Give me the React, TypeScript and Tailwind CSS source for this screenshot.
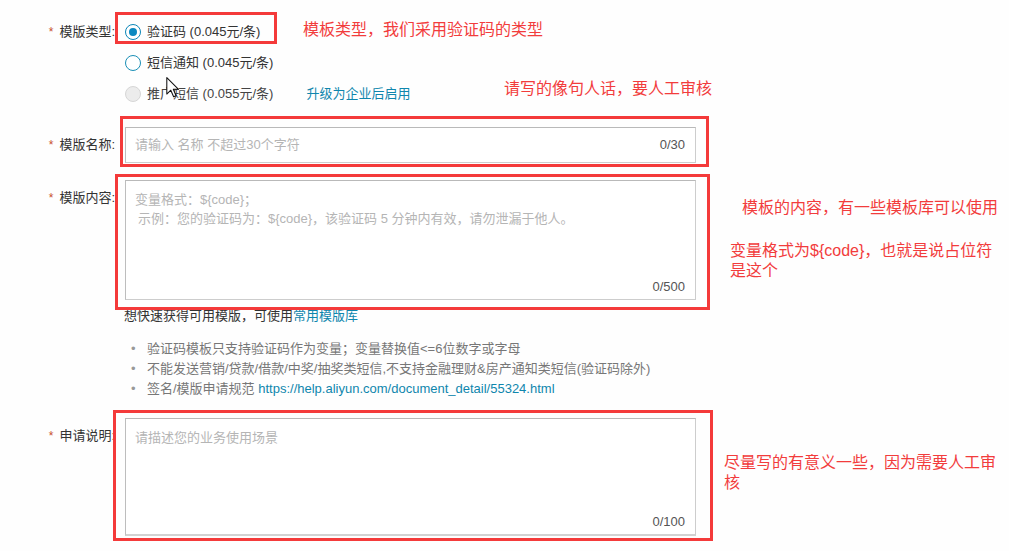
import type { ReactNode } from 'react';

const FONT = '"Liberation Sans", "Noto Sans CJK SC", sans-serif';

function Label({ children, className = '' }: { children: ReactNode; className?: string }) {
  return (
    <div className={`w-[115px] shrink-0 flex items-center justify-end text-[13px] text-[#333] ${className}`}>
      <span className="mr-[6px] text-[#c8502e] text-[12px]">*</span>
      {children}
    </div>
  );
}

function Radio({ state, children }: { state: 'checked' | 'idle' | 'disabled'; children: ReactNode }) {
  const ring =
    state === 'checked'
      ? 'border-[#0b86b8] bg-white'
      : state === 'idle'
        ? 'border-[#1a8fb6] bg-white'
        : 'border-[#d6d6d6] bg-[#ececec]';
  return (
    <div className="h-[31px] flex items-center">
      <span className={`w-[16px] h-[16px] rounded-full border-[1.5px] flex items-center justify-center ${ring}`}>
        {state === 'checked' && <span className="w-[8px] h-[8px] rounded-full bg-[#0a88c0]" />}
      </span>
      <span className="ml-[6px] text-[13px] text-[#333]">{children}</span>
    </div>
  );
}

function Field({ placeholder, counter, tall, height }: { placeholder: ReactNode; counter: string; tall?: boolean; height: string }) {
  return (
    <div
      className={`relative w-[571px] ${height} border border-[#cdcdcd] border-t-[#b9b9b9] border-l-[#bdbdbd] bg-white text-[13px]`}
    >
      <div className={`text-[#b5b5b5] pl-[9px] ${tall ? 'pt-[9px] leading-[19px]' : 'leading-[34px]'}`}>{placeholder}</div>
      <span
        className={`absolute right-[10px] text-[#555] ${tall ? 'bottom-[5px] leading-[14px]' : 'top-0 leading-[34px]'}`}
      >
        {counter}
      </span>
    </div>
  );
}

function RedBox({ className }: { className: string }) {
  return <div className={`absolute border-[3px] border-[#f43a3a] pointer-events-none ${className}`} />;
}

function Note({ className, children }: { className: string; children: ReactNode }) {
  return <div className={`absolute text-[16px] leading-[20px] text-[#f23c3c] ${className}`}>{children}</div>;
}

export default function App() {
  return (
    <div className="relative w-[1009px] h-[551px] overflow-hidden bg-[#fefefe]" style={{ fontFamily: FONT }}>
      <div className="pt-[16px] flex flex-col">
        {/* template type */}
        <div className="flex gap-[10px]">
          <Label className="h-[31px]">模版类型:</Label>
          <div className="flex flex-col">
            <Radio state="checked">验证码 (0.045元/条)</Radio>
            <Radio state="idle">短信通知 (0.045元/条)</Radio>
            <div className="flex items-center">
              <Radio state="disabled">
                <span className="text-[#444]">推广短信 (0.055元/条)</span>
              </Radio>
              <a className="ml-[33px] text-[13px] text-[#0f86ad]">升级为企业后启用</a>
            </div>
          </div>
        </div>

        {/* name */}
        <div className="flex gap-[10px] mt-[18px]">
          <Label className="h-[36px]">模版名称:</Label>
          <Field height="h-[36px]" placeholder="请输入 名称 不超过30个字符" counter="0/30" />
        </div>

        {/* content */}
        <div className="flex gap-[10px] mt-[17px]">
          <Label className="h-[36px]">模版内容:</Label>
          <div className="flex flex-col">
            <Field
              tall
              height="h-[120px]"
              placeholder={
                <>
                  <div>变量格式：${'{code}'}；</div>
                  <div className="pl-[3px]">示例：您的验证码为：${'{code}'}，该验证码 5 分钟内有效，请勿泄漏于他人。</div>
                </>
              }
              counter="0/500"
            />
            <div className="mt-[6px] -ml-[1px] text-[13px] leading-[20px] text-[#333]">
              想快速获得可用模版，可使用<a className="text-[#0f86ad]">常用模版库</a>
            </div>
            <ul className="mt-[13px] text-[13px] leading-[20px] text-[#777]">
              {[
                '验证码模板只支持验证码作为变量；变量替换值<=6位数字或字母',
                '不能发送营销/贷款/借款/中奖/抽奖类短信,不支持金融理财&房产通知类短信(验证码除外)',
                null,
              ].map((line, i) => (
                <li key={i} className="flex">
                  <span className="w-[22px] pl-[6px] text-[#999]">•</span>
                  {line ?? (
                    <span>
                      签名/模版申请规范 <a className="text-[#0f86ad]">https://help.aliyun.com/document_detail/55324.html</a>
                    </span>
                  )}
                </li>
              ))}
            </ul>
          </div>
        </div>

        {/* description */}
        <div className="flex gap-[10px] mt-[19px]">
          <Label className="h-[36px]">申请说明:</Label>
          <Field tall height="h-[118px] border-b-2 border-b-[#d2d2d2]" placeholder="请描述您的业务使用场景" counter="0/100" />
        </div>
      </div>

      {/* annotations */}
      <RedBox className="left-[115px] top-[12px] w-[162px] h-[32px]" />
      <RedBox className="left-[120px] top-[116px] w-[589px] h-[51px]" />
      <RedBox className="left-[115px] top-[174px] w-[595px] h-[136px]" />
      <RedBox className="left-[113px] top-[410px] w-[600px] h-[131px]" />

      <Note className="left-[303px] top-[20px]">模板类型，我们采用验证码的类型</Note>
      <Note className="left-[504px] top-[79px]">请写的像句人话，要人工审核</Note>
      <Note className="left-[742px] top-[198px]">模板的内容，有一些模板库可以使用</Note>
      <Note className="left-[730px] top-[241px]">
        变量格式为${'{code}'}，也就是说占位符
        <br />
        是这个
      </Note>
      <Note className="left-[724px] top-[453px]">
        尽量写的有意义一些，因为需要人工审
        <br />核
      </Note>

      {/* mouse pointer */}
      <svg className="absolute left-[166px] top-[77px]" width="14" height="21" viewBox="0 0 13 20">
        <path d="M0.6 0.6 L0.6 16.2 L4.4 12.6 L7.1 18.8 L9.4 17.8 L6.8 11.7 L11.8 11.7 Z" fill="#fff" stroke="#111" strokeWidth="1" strokeLinejoin="round" />
      </svg>
    </div>
  );
}
